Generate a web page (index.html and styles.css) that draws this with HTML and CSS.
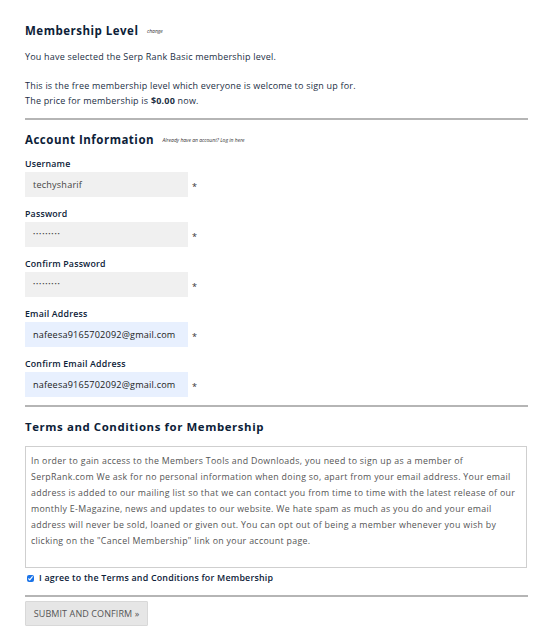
FILE: index.html
```html
<!DOCTYPE html>
<html>
<head>
<meta charset="utf-8">
<link rel="stylesheet" href="styles.css">
</head>
<body>
<div class="page">
  <section class="sec">
    <h2 class="heading">Membership Level <span class="aside">change</span></h2>
    <p class="text first">You have selected the Serp Rank Basic membership level.</p>
    <p class="text gap">This is the free membership level which everyone is welcome to sign up for.</p>
    <p class="text">The price for membership is <strong>$0.00</strong> now.</p>
  </section>
  <hr class="rule rule-1">
  <section class="sec">
    <h2 class="heading">Account Information <span class="aside">Already have an account? Log in here</span></h2>
    <div class="field field-first">
      <label class="label">Username</label>
      <div class="row"><div class="input">techysharif</div><span class="req">*</span></div>
    </div>
    <div class="field">
      <label class="label">Password</label>
      <div class="row"><div class="input pw">&bull;&bull;&bull;&bull;&bull;&bull;&bull;&bull;&bull;</div><span class="req">*</span></div>
    </div>
    <div class="field">
      <label class="label">Confirm Password</label>
      <div class="row"><div class="input pw">&bull;&bull;&bull;&bull;&bull;&bull;&bull;&bull;&bull;</div><span class="req">*</span></div>
    </div>
    <div class="field">
      <label class="label">Email Address</label>
      <div class="row"><div class="input filled">nafeesa9165702092@gmail.com</div><span class="req">*</span></div>
    </div>
    <div class="field">
      <label class="label">Confirm Email Address</label>
      <div class="row"><div class="input filled">nafeesa9165702092@gmail.com</div><span class="req">*</span></div>
    </div>
  </section>
  <hr class="rule rule-2">
  <section class="sec">
    <h2 class="heading terms-h">Terms and Conditions for Membership</h2>
    <div class="terms">In order to gain access to the Members Tools and Downloads, you need to sign up as a member of<br>SerpRank.com We ask for no personal information when doing so, apart from your email address. Your email<br>address is added to our mailing list so that we can contact you from time to time with the latest release of our<br>monthly E-Magazine, news and updates to our website. We hate spam as much as you do and your email<br>address will never be sold, loaned or given out. You can opt out of being a member whenever you wish by<br>clicking on the "Cancel Membership" link on your account page.</div>
    <label class="agree"><input type="checkbox" class="check" checked> I agree to the Terms and Conditions for Membership</label>
  </section>
  <hr class="rule rule-3">
  <button class="submit">SUBMIT AND CONFIRM &raquo;</button>
</div>
</body>
</html>
```
FILE: styles.css
```css
html, body {
  margin: 0;
  padding: 0;
  background: #ffffff;
}
body {
  font-family: "Open Sans", "Noto Sans", sans-serif;
  color: #1c2f45;
}
.page {
  width: 503px;
  padding: 22px 0 0 25px;
}
.sec { margin: 0; }
.heading {
  margin: 0;
  font-size: 11.5px;
  font-weight: 700;
  letter-spacing: 0.5px;
  color: #0c2138;
  line-height: 18px;
}
.aside {
  font-size: 5px;
  font-style: italic;
  font-weight: 400;
  letter-spacing: 0;
  color: #333;
  margin-left: 5px;
  vertical-align: 2px;
}
.text {
  margin: 0;
  font-size: 9px;
  line-height: 15px;
  letter-spacing: 0.2px;
  color: #1c2f45;
}
.text.first { margin-top: 9px; }
.text.gap { margin-top: 14px; }
.text strong { font-weight: 700; }
.rule {
  border: 0;
  height: 2px;
  background: #b5b5b5;
  margin: 0;
}
.rule-1 { margin-top: 10px; margin-bottom: 11px; }
.rule-2 { margin-top: 8px; margin-bottom: 11px; }
.rule-3 { margin-top: 10px; margin-bottom: 4px; }
.field { margin-top: 10px; }
.field.field-first { margin-top: 8px; }
.label {
  display: block;
  font-size: 8.8px;
  font-weight: 600;
  letter-spacing: 0.2px;
  line-height: 14px;
  color: #0c2138;
  margin-bottom: 1px;
}
.row {
  display: flex;
  align-items: center;
}
.input {
  width: 163px;
  height: 25px;
  box-sizing: border-box;
  background: #f0f0f0;
  padding: 0 8px;
  font-size: 9.1px;
  letter-spacing: 0.2px;
  line-height: 25px;
  color: #444;
}
.input.pw { font-size: 6px; letter-spacing: 0.8px; }
.input.filled { background: #e8f0fe; color: #1a1a1a; }
.req {
  font-size: 9px;
  margin-left: 4px;
  margin-top: 3px;
  color: #333;
}
.terms-h {
  font-size: 11.4px;
  letter-spacing: 0.6px;
}
.terms {
  margin-top: 10px;
  width: 502px;
  height: 122px;
  box-sizing: border-box;
  border: 1px solid #cfcfcf;
  padding: 6px 4px 6px 5px;
  font-size: 8.8px;
  line-height: 16px;
  color: #555;
  letter-spacing: 0.32px;
  overflow: hidden;
}
.agree {
  display: flex;
  align-items: center;
  margin-top: 3px;
  font-size: 8.9px;
  font-weight: 600;
  letter-spacing: 0.2px;
  color: #0c2138;
  line-height: 14px;
}
.check {
  width: 7px;
  height: 7px;
  margin: 0 5px 0 2px;
  accent-color: #1a73e8;
}
.submit {
  display: block;
  font-family: "Open Sans", "Noto Sans", sans-serif;
  background: #e6e6e6;
  border: 1px solid #d8d8d8;
  border-radius: 1px;
  width: 123px;
  height: 25px;
  padding: 0;
  font-size: 9px;
  color: #555;
  letter-spacing: 0.1px;
}
```
